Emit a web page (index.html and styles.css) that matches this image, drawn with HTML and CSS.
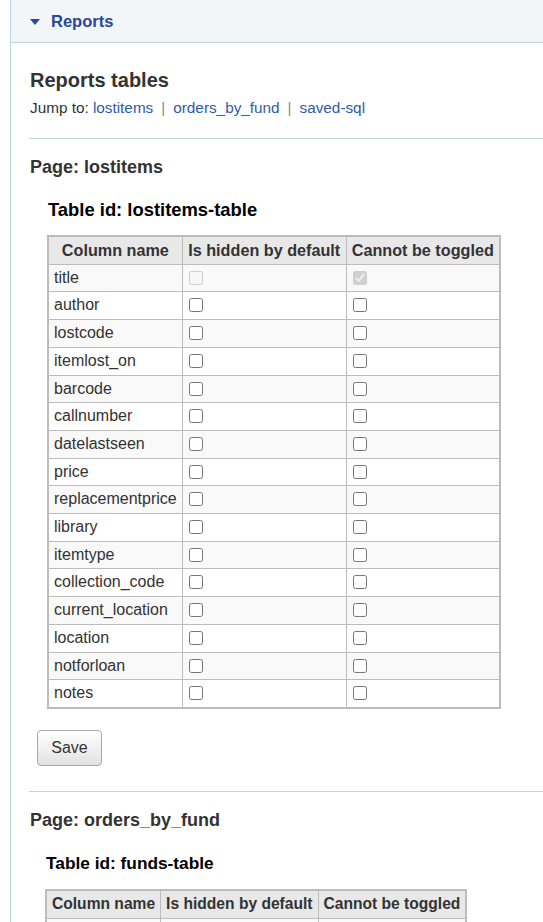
FILE: index.html
```html
<!DOCTYPE html>
<html>
<head>
<meta charset="utf-8">
<link rel="stylesheet" href="styles.css">
</head>
<body>
<div class="panel">
  <div class="panel-head">
    <span class="caret"></span>
    <span class="panel-title">Reports</span>
  </div>
  <div class="panel-body">
    <h2 class="section-title">Reports tables</h2>
    <p class="jump">Jump to: <a href="#lostitems">lostitems</a><span class="sep">|</span><a href="#orders_by_fund">orders_by_fund</a><span class="sep">|</span><a href="#saved-sql">saved-sql</a></p>
    <hr class="rule">

    <h3 class="page-title">Page: lostitems</h3>
    <div class="table-block">
      <h4 class="table-title">Table id: lostitems-table</h4>
      <table class="cols">
        <thead>
          <tr><th>Column name</th><th>Is hidden by default</th><th>Cannot be toggled</th></tr>
        </thead>
        <tbody>
          <tr><td>title</td><td><input type="checkbox" disabled></td><td><input type="checkbox" checked disabled></td></tr>
          <tr><td>author</td><td><input type="checkbox"></td><td><input type="checkbox"></td></tr>
          <tr><td>lostcode</td><td><input type="checkbox"></td><td><input type="checkbox"></td></tr>
          <tr><td>itemlost_on</td><td><input type="checkbox"></td><td><input type="checkbox"></td></tr>
          <tr><td>barcode</td><td><input type="checkbox"></td><td><input type="checkbox"></td></tr>
          <tr><td>callnumber</td><td><input type="checkbox"></td><td><input type="checkbox"></td></tr>
          <tr><td>datelastseen</td><td><input type="checkbox"></td><td><input type="checkbox"></td></tr>
          <tr><td>price</td><td><input type="checkbox"></td><td><input type="checkbox"></td></tr>
          <tr><td>replacementprice</td><td><input type="checkbox"></td><td><input type="checkbox"></td></tr>
          <tr><td>library</td><td><input type="checkbox"></td><td><input type="checkbox"></td></tr>
          <tr><td>itemtype</td><td><input type="checkbox"></td><td><input type="checkbox"></td></tr>
          <tr><td>collection_code</td><td><input type="checkbox"></td><td><input type="checkbox"></td></tr>
          <tr><td>current_location</td><td><input type="checkbox"></td><td><input type="checkbox"></td></tr>
          <tr><td>location</td><td><input type="checkbox"></td><td><input type="checkbox"></td></tr>
          <tr><td>notforloan</td><td><input type="checkbox"></td><td><input type="checkbox"></td></tr>
          <tr><td>notes</td><td><input type="checkbox"></td><td><input type="checkbox"></td></tr>
        </tbody>
      </table>
    </div>
    <button class="btn" type="button">Save</button>
    <hr class="rule rule-2">

    <h3 class="page-title">Page: orders_by_fund</h3>
    <div class="table-block block-2">
      <h4 class="table-title small">Table id: funds-table</h4>
      <table class="cols small">
        <thead>
          <tr><th>Column name</th><th>Is hidden by default</th><th>Cannot be toggled</th></tr>
        </thead>
        <tbody>
          <tr><td>fund</td><td><input type="checkbox"></td><td><input type="checkbox"></td></tr>
          <tr><td>basket</td><td><input type="checkbox"></td><td><input type="checkbox"></td></tr>
        </tbody>
      </table>
    </div>
  </div>
</div>
</body>
</html>
```

FILE: styles.css
```css
html, body {
  margin: 0;
  padding: 0;
  background: #ffffff;
  font-family: "Liberation Sans", Arial, sans-serif;
  color: #333333;
  overflow: hidden;
}

.panel {
  margin-left: 10px;
  border-left: 1px solid #b9d9dc;
  min-height: 922px;
}

.panel-head {
  height: 42px;
  background: #f3f6f7;
  border-bottom: 1px solid #b9d9dc;
  display: flex;
  align-items: center;
  padding-left: 19px;
  box-sizing: content-box;
}

.caret {
  width: 0;
  height: 0;
  border-left: 5px solid transparent;
  border-right: 5px solid transparent;
  border-top: 6px solid #2a4a9c;
  margin-right: 11px;
  margin-top: 1px;
}

.panel-title {
  font-size: 16.5px;
  font-weight: bold;
  color: #28479e;
}

.panel-body {
  padding-left: 18px;
}

.section-title {
  margin: 25px 0 0 1px;
  font-size: 20px;
  line-height: 24px;
  font-weight: bold;
  color: #333333;
}

.jump {
  margin: 6px 0 0 1px;
  font-size: 15.3px;
  line-height: 20px;
  color: #333333;
}

.jump a {
  color: #2f5ba8;
  text-decoration: none;
}

.sep {
  color: #8a8a8a;
  margin: 0 8px;
}

.rule {
  border: 0;
  border-top: 1px solid #b9d9dc;
  margin: 20px 0 0 0;
  height: 0;
}

.rule-2 {
  margin-top: 25px;
}

.page-title {
  margin: 17px 0 0 1px;
  font-size: 18px;
  line-height: 22px;
  font-weight: bold;
  color: #333333;
}

.table-block {
  margin-left: 18px;
}

.table-block.block-2 {
  margin-left: 16px;
}

.table-title {
  margin: 21px 0 0 1px;
  font-size: 18.4px;
  line-height: 22px;
  font-weight: bold;
  color: #000000;
}

.table-title.small {
  font-size: 17.3px;
  margin-top: 21px;
}

.cols {
  margin-top: 14px;
  border-collapse: collapse;
  border: 2px solid #bcbcbc;
  font-size: 16px;
}

.cols th,
.cols td {
  border: 1px solid #bcbcbc;
  padding: 4px 5px;
  line-height: 18.7px;
  white-space: nowrap;
}

.cols th {
  background: #e8e8e8;
  font-weight: bold;
  font-size: 16.2px;
  text-align: center;
  color: #333333;
}

.cols th:nth-child(2) {
  min-width: 153px;
}

.cols td {
  text-align: left;
  color: #333333;
}

.cols tbody tr:nth-child(odd) td {
  background: #f9f9f9;
}

.cols tbody tr:nth-child(even) td {
  background: #ffffff;
}

.cols input[type="checkbox"] {
  width: 14px;
  height: 14px;
  margin: 0 0 0 1px;
  vertical-align: -2px;
}

.cols.small {
  font-size: 15.4px;
  margin-top: 15px;
}

.cols.small th {
  font-size: 15.6px;
}

.cols.small th:nth-child(2) {
  min-width: 0;
}

.btn {
  display: block;
  margin: 21px 0 0 8px;
  width: 65px;
  height: 36px;
  font-family: "Liberation Sans", Arial, sans-serif;
  font-size: 16px;
  color: #333333;
  background: linear-gradient(#ffffff, #e2e2e2);
  border: 1px solid #a9a9a9;
  border-radius: 4px;
  padding: 0;
}
```
